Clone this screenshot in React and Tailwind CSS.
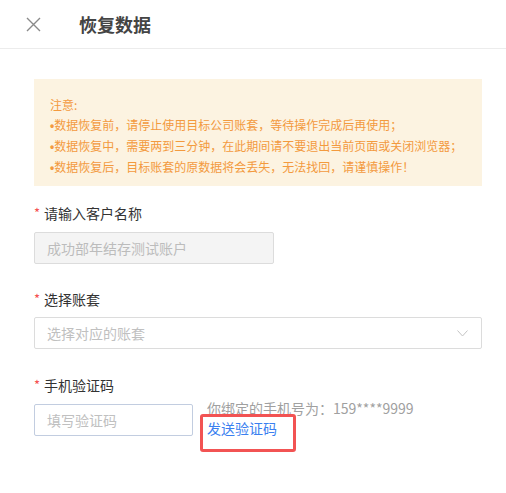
import React from 'react';

const font = { fontFamily: '"Noto Sans CJK SC", "Noto Sans", sans-serif' };

const Label = ({ children }) => (
  <div className="flex items-center h-[20px] text-[14px] text-[#333]">
    <span className="text-[#f5504f] mr-[4px] text-[13px]">*</span>
    <span>{children}</span>
  </div>
);

const Dot = () => <span className="font-['Liberation_Sans'] font-bold">•</span>;

export default function App() {
  return (
    <div className="w-[506px] h-[493px] bg-white" style={font}>
      {/* Header */}
      <div className="h-[49px] flex items-center border-b border-[#ececec]">
        <svg className="ml-[26px]" width="15" height="15" viewBox="0 0 15 15" fill="none" stroke="#8a8a8a" strokeWidth="1.4">
          <path d="M1 1 L14 14 M14 1 L1 14" />
        </svg>
        <h1 className="ml-[38px] text-[18px] font-bold text-[#444]">恢复数据</h1>
      </div>

      <div className="pl-[34px] pr-[24px] pt-[30px]">
        {/* Notice */}
        <div className="h-[107px] bg-[#fcf3e1] pl-[16px] pt-[16px] text-[12px] leading-[20px] text-[#f39a3e]">
          <p>注意:</p>
          <p><Dot />数据恢复前，请停止使用目标公司账套，等待操作完成后再使用；</p>
          <p><Dot />数据恢复中，需要两到三分钟，在此期间请不要退出当前页面或关闭浏览器；</p>
          <p><Dot />数据恢复后，目标账套的原数据将会丢失，无法找回，请谨慎操作！</p>
        </div>

        {/* Customer name */}
        <div className="mt-[17px]">
          <Label>请输入客户名称</Label>
          <div className="mt-[9px] w-[240px] h-[32px] bg-[#f4f4f4] border border-[#dcdcdc] rounded-[2px] flex items-center px-[12px] text-[14px] text-[#bcbcbc]">
            成功部年结存测试账户
          </div>
        </div>

        {/* Account set */}
        <div className="mt-[25px]">
          <Label>选择账套</Label>
          <div className="mt-[8px] h-[32px] border border-[#dcdcdc] rounded-[2px] flex items-center justify-between pl-[12px] pr-[13px] text-[14px] text-[#c0c0c0]">
            <span>选择对应的账套</span>
            <svg width="11" height="7" viewBox="0 0 11 7" fill="none" stroke="#c4c4c4" strokeWidth="1">
              <path d="M0.5 0.5 L5.5 6 L10.5 0.5" />
            </svg>
          </div>
        </div>

        {/* Verify code */}
        <div className="mt-[26px]">
          <Label>手机验证码</Label>
          <div className="mt-[9px] flex">
            <div className="w-[159px] h-[32px] border border-[#c2cde0] rounded-[2px] flex items-center px-[12px] text-[14px] text-[#c0c0c0]">
              填写验证码
            </div>
            <div className="ml-[14px] -mt-[6px] text-[14px] leading-[20px]">
              <p className="text-[#a0a0a0]">你绑定的手机号为：159****9999</p>
              <div className="relative">
                <span className="text-[#3a7ff0]">发送验证码</span>
                <div className="absolute left-[-7px] top-[-4px] w-[96px] h-[38px] border-[3px] border-[#f25353] rounded-[3px]" />
              </div>
            </div>
          </div>
        </div>
      </div>
    </div>
  );
}
